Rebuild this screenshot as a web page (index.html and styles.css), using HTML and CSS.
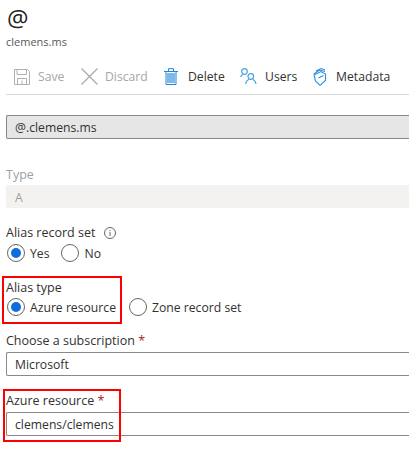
FILE: index.html
```html
<!DOCTYPE html>
<html lang="en">
<head>
<meta charset="utf-8">
<title>@ - clemens.ms</title>
<link rel="stylesheet" href="styles.css">
</head>
<body>
<header class="head">
  <h1 class="title">@</h1>
  <p class="subtitle">clemens.ms</p>
</header>
<nav class="toolbar">
  <span class="tool tool-off tool-save">
    <svg class="icon" width="16" height="16" viewBox="0 0 16 16" fill="none" stroke="#b0b0b0"><path d="M.5.5h13l2 2v13H.5z"/><path d="M3 .5v5h9.500v-5M3.500 15.500v-6h9v6M8 11.500v4"/></svg>
    Save
  </span>
  <span class="tool tool-off tool-discard">
    <svg class="icon" width="17" height="17" viewBox="0 0 17 17" fill="none" stroke="#a6a6a6" stroke-width="1.100"><path d="M.5.5l16 16M16.500.5l-16 16"/></svg>
    Discard
  </span>
  <span class="tool tool-delete">
    <svg class="icon" width="14" height="17" viewBox="0 0 14 17"><path fill="#7fb9ec" d="M3 5h8v10H3z"/><path fill="none" stroke="#1f86d9" d="M2 3.500v13h10v-13M0 3.500h14M4.500 3V.7h5V3"/></svg>
    Delete
  </span>
  <span class="tool tool-users">
    <svg class="icon" width="17" height="17" viewBox="0 0 17 17" fill="none" stroke="#45a3dc" stroke-width="1.200"><circle cx="4.500" cy="3.500" r="2.800"/><circle cx="10.800" cy="8.500" r="2.800"/><path d="M.6 9C1 7.800 1.800 7 2.800 6.300M5.600 16c.2-2.200 1.500-3.800 3.200-4.800M16 16c-.2-2.200-1.500-3.800-3.200-4.800"/></svg>
    Users
  </span>
  <span class="tool tool-meta">
    <svg class="icon" width="14" height="18" viewBox="0 0 14 18" fill="none" stroke="#2b90e0" stroke-width="1.100"><path d="M1 7l7-3.500 4.500 2.500v6.500L7 17.300 2.500 13z"/><path d="M.8 6L6.500 2l5.500 1.500M3 3L8 .6l4 1.400"/><path d="M5.500 10l5-2.500"/></svg>
    Metadata
  </span>
</nav>
<main class="form">
  <div class="input input-readonly name-input">@.clemens.ms</div>

  <section class="type-field">
    <div class="label label-off">Type</div>
    <div class="input input-disabled">A</div>
  </section>

  <section class="alias-field">
    <div class="label">Alias record set
      <svg class="info" width="12" height="12" viewBox="0 0 12 12" fill="none" stroke="#666"><circle cx="6" cy="6" r="5.500"/><path d="M6 5v4M6 3v1.200"/></svg>
    </div>
    <div class="radios">
      <span class="radio radio-on"></span><span class="radio-text radio-yes">Yes</span>
      <span class="radio"></span><span class="radio-text">No</span>
    </div>
  </section>

  <section class="alias-type-field">
    <div class="label">Alias type</div>
    <div class="radios radios-tight">
      <span class="radio radio-on"></span><span class="radio-text radio-azure">Azure resource</span>
      <span class="radio"></span><span class="radio-text">Zone record set</span>
    </div>
    <div class="highlight highlight-type"></div>
  </section>

  <section class="sub-field">
    <div class="label">Choose a subscription <span class="req">*</span></div>
    <div class="input">Microsoft</div>
  </section>

  <section class="res-field">
    <div class="label">Azure resource <span class="req">*</span></div>
    <div class="input">clemens/clemens</div>
    <div class="highlight highlight-res"></div>
  </section>
</main>
</body>
</html>
```
FILE: styles.css
```css
html, body {
  margin: 0;
  padding: 0;
  background: #fff;
  overflow: hidden;
}
body {
  width: 409px;
  height: 449px;
  font-family: "Open Sans", "Noto Sans", "Liberation Sans", sans-serif;
  font-size: 12.2px;
  color: #323130;
}
.head {
  padding: 2px 0 0 6px;
}
.title {
  margin: 0 0 0 1px;
  font-size: 24px;
  font-weight: 400;
  line-height: 32px;
  height: 32px;
  color: #222;
}
.subtitle {
  margin: 0;
  font-size: 11px;
  line-height: 16px;
  color: #595959;
}
.toolbar {
  display: flex;
  align-items: center;
  box-sizing: border-box;
  height: 36px;
  margin: 9px 0 0 6px;
  padding-left: 8px;
  border-bottom: 1px solid #d8d8d8;
  white-space: nowrap;
}
.tool {
  display: flex;
  align-items: center;
  flex: none;
  gap: 8px;
}
.tool-off { color: #a6a6a6; }
.tool-save { width: 67px; }
.tool-discard { width: 83px; gap: 7px; }
.tool-delete { width: 76px; gap: 10px; }
.tool-users { width: 73px; gap: 8px; }
.tool-meta { gap: 9px; }
.icon { flex: none; }
.form {
  padding-left: 6px;
}
.input {
  height: 24px;
  box-sizing: border-box;
  border: 1px solid #8a8886;
  border-right: 0;
  border-radius: 2px 0 0 2px;
  padding-left: 8px;
  line-height: 24px;
  color: #323130;
}
.input-readonly { background: #e6e6e6; }
.input-disabled {
  background: #f3f2f1;
  border-color: #f3f2f1;
  color: #a19f9d;
  height: 23px;
}
.name-input { margin-top: 20px; }
.label {
  height: 16px;
  line-height: 18px;
  font-size: 12.5px;
  color: #323130;
}
.label-off { color: #a19f9d; }
.type-field { margin-top: 27px; }
.type-field .label { margin-bottom: 3px; }
.alias-field { margin-top: 16px; }
.alias-type-field { margin-top: 16px; position: relative; }
.sub-field { margin-top: 15px; }
.sub-field .label, .res-field .label { margin-bottom: 4px; }
.res-field { margin-top: 16px; position: relative; }
.info {
  margin-left: 5px;
  vertical-align: -2px;
}
.radios {
  display: flex;
  align-items: center;
  height: 20px;
  margin-top: 3px;
  margin-left: 1px;
}
.radios-tight { margin-top: 2px; }
.radio {
  width: 18px;
  height: 18px;
  box-sizing: border-box;
  border: 1px solid #666;
  border-radius: 50%;
  background: #fff;
  flex: none;
  display: flex;
  align-items: center;
  justify-content: center;
}
.radio-on::after {
  content: "";
  width: 10px;
  height: 10px;
  border-radius: 50%;
  background: #0f6cdb;
}
.radio-text { margin-left: 5px; }
.radio-yes { margin-right: 12px; }
.radio-azure { margin-right: 13px; }
.req { color: #a4262c; }
.highlight {
  position: absolute;
  box-sizing: border-box;
  border: 2px solid #f00;
  pointer-events: none;
}
.highlight-type { left: -4px; top: -3px; width: 120px; height: 48px; }
.highlight-res { left: -3px; top: -3px; width: 118px; height: 53px; }
```
